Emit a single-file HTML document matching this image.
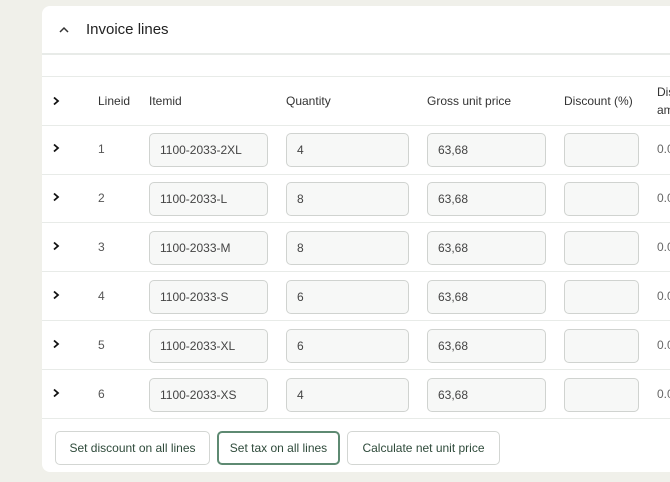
<!DOCTYPE html>
<html><head><style>
*{box-sizing:border-box;margin:0;padding:0}
body{width:670px;height:482px;background:#f0f0ea;font-family:"Liberation Sans",sans-serif;position:relative;overflow:hidden;color:#333}
.card{position:absolute;left:42px;top:6px;width:660px;height:466px;background:#fff;border-radius:8px}
.a{position:absolute}
.hl{position:absolute;left:42px;width:628px;height:1px;background:#e8ebe8}
.t{position:absolute;font-size:12px;color:#333;white-space:nowrap}
.in{position:absolute;height:34px;border:1px solid #d0d3d0;border-radius:5px;background:#f7f8f7;font-size:12px;color:#444;padding-left:10px;line-height:32px}
.btn{position:absolute;top:431px;height:34px;border:1px solid #d3d6d3;border-radius:5px;background:#fff;font-size:12px;color:#2e4a3a;text-align:center;line-height:32px}
</style></head><body>
<div class="card"></div>
<svg class="a" style="left:58px;top:25px" width="12" height="10" viewBox="0 0 12 10"><path d="M2 7L6 3L10 7" fill="none" stroke="#333" stroke-width="1.5"/></svg>
<div class="t" style="left:86px;top:21px;font-size:15px;color:#222">Invoice lines</div>
<div class="hl" style="top:53px;height:2px"></div>
<div class="hl" style="top:76px"></div>
<div class="hl" style="top:125px"></div>
<div class="hl" style="top:174px"></div>
<div class="hl" style="top:222px"></div>
<div class="hl" style="top:271px"></div>
<div class="hl" style="top:320px"></div>
<div class="hl" style="top:369px"></div>
<div class="hl" style="top:418px"></div>
<svg class="a" style="left:51px;top:96px" width="10" height="10" viewBox="0 0 10 10"><path d="M3 1.5L7 5L3 8.5" fill="none" stroke="#111" stroke-width="1.8"/></svg>
<div class="t" style="left:98px;top:94px">Lineid</div>
<div class="t" style="left:149px;top:94px">Itemid</div>
<div class="t" style="left:286px;top:94px">Quantity</div>
<div class="t" style="left:427px;top:94px">Gross unit price</div>
<div class="t" style="left:564px;top:94px">Discount (%)</div>
<div class="t" style="left:657px;top:85px">Dis</div>
<div class="t" style="left:657px;top:103px">am</div>
<div id="rows"></div>
<script>
var d=[["1","1100-2033-2XL","4"],["2","1100-2033-L","8"],["3","1100-2033-M","8"],["4","1100-2033-S","6"],["5","1100-2033-XL","6"],["6","1100-2033-XS","4"]];
var h="";d.forEach(function(r,i){var c=149+i*49;var y=c-16;
h+='<svg class="a" style="left:51px;top:'+(c-6)+'px" width="10" height="10" viewBox="0 0 10 10"><path d="M3 1.5L7 5L3 8.5" fill="none" stroke="#111" stroke-width="1.8"/></svg>';
h+='<div class="t" style="left:98px;top:'+(c-7)+'px;color:#555">'+r[0]+'</div>';
h+='<div class="in" style="left:149px;top:'+y+'px;width:119px">'+r[1]+'</div>';
h+='<div class="in" style="left:286px;top:'+y+'px;width:123px">'+r[2]+'</div>';
h+='<div class="in" style="left:427px;top:'+y+'px;width:119px">63,68</div>';
h+='<div class="in" style="left:564px;top:'+y+'px;width:75px"></div>';
h+='<div class="t" style="left:657px;top:'+(c-7)+'px;color:#666">0.0</div>';});
document.getElementById("rows").innerHTML=h;
</script>
<div class="btn" style="left:55px;width:155px">Set discount on all lines</div>
<div class="btn" style="left:217px;width:123px;border:2px solid #5e8a72;line-height:30px">Set tax on all lines</div>
<div class="btn" style="left:347px;width:153px">Calculate net unit price</div>
</body></html>
